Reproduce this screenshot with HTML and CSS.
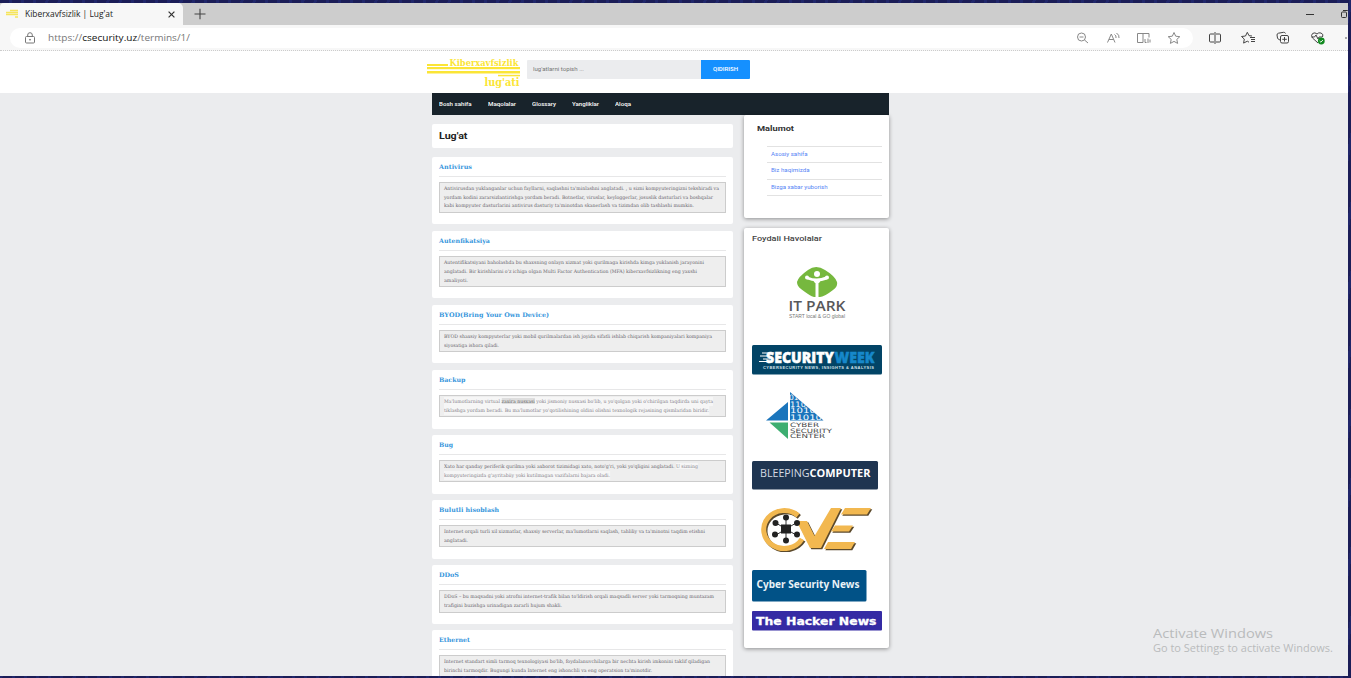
FILE: index.html
```html
<!DOCTYPE html>
<html lang="uz">
<head>
<meta charset="utf-8">
<title>Kiberxavfsizlik | Lug'at</title>
<link rel="stylesheet" href="styles.css">
</head>
<body>
<div class="desktop">
<div class="window">
  <div class="tabs">
    <div class="tab">
      <svg class="favicon" width="13" height="10" viewBox="0 0 13 10"><path d="M0 3.5h12M0 5.5h12M4 1.5h8M9 8h3" stroke="#f6e55c" stroke-width="1.6"/></svg>
      <span class="tab-title"><span data-w="88">Kiberxavfsizlik | Lug'at</span></span>
      <svg width="7" height="7" viewBox="0 0 7 7"><path d="M.6.6l5.8 5.8M6.4.6L.6 6.4" stroke="#333" stroke-width="1.2"/></svg>
    </div>
    <svg class="plus" width="12" height="12" viewBox="0 0 12 12"><path d="M6 .8v10.4M.5 6h11" stroke="#444" stroke-width="1.1"/></svg>
    <svg class="winctl" width="45" height="12" viewBox="0 0 45 12" fill="none" stroke="#333"><path d="M2 6.5h8"/><rect x="37.500" y="4" width="5" height="5.500" rx="1"/><path d="M39 2.500h4.500q1.500 0 1.500 1.500v4"/></svg>
  </div>
  <div class="toolbar">
    <div class="address">
      <svg width="12" height="12" viewBox="0 0 12 12" fill="none" stroke="#777"><rect x="1.500" y="4.500" width="9" height="6.500" rx="1"/><path d="M3.700 4.500V3a2.300 2.300 0 0 1 4.600 0v1.500"/><circle cx="6" cy="7.700" r=".5" fill="#777"/></svg>
      <span class="url"><span data-w="142">https://<b>csecurity.uz</b>/termins/1/</span></span>
      <svg class="tools" width="106" height="14" viewBox="0 0 106 14" fill="none" stroke="#888">
        <circle cx="5.500" cy="6" r="4"/><path d="M8.500 9l3.500 3M3.500 6h4"/>
        <path d="M31.500 11.500L35.300 3l3.700 8.500M33 8.500h4.800M38.500 3.500q2 1 1.500 3.500M40.500 2q3 2 2.500 5" />
        <path d="M67 11.500h-5.500V2.500h5.500v9M67 2.500h6v4M69 8v3.500h1.500M72 7.500v4.500M74 8.500v3"/>
        <path d="M98 1.500l1.700 3.700 4.100.5-3 2.700.8 4-3.600-2-3.600 2 .8-4-3-2.700 4.100-.5z"/>
      </svg>
    </div>
    <svg class="actions" width="144" height="14" viewBox="0 0 144 14" fill="none" stroke="#444">
      <path d="M6 3H2.500Q1.500 3 1.500 4v6q0 1 1 1H6M8 3h3.500q1 0 1 1v6q0 1-1 1H8M7 1v12"/>
      <path d="M44 5l-3-.3-1.700-3.400L37.500 5l-4 .5 2.800 2.600-.7 4 3.700-1.900 1.700 1M42 6.500h5M43 8.500h4M43 10.500h4"/>
      <path d="M72 9q-2-.5-2.500-2L69 4q0-1.500 1.500-1.800l5-.9q1.500-.2 2 1.200"/><rect x="72.500" y="4.500" width="8" height="7.500" rx="1.500"/><path d="M76.500 6v4.500M74.300 8.300h4.500"/>
      <path d="M110 12L104.500 7q-2-3 .2-4.600Q107 1 109 3q1.500-1.800 4-1 3 1.200 1.500 4M103.500 6h3l1.500-2 2 4 1-2h3"/>
      <circle cx="113.300" cy="10" r="3.400" fill="#128a20" stroke="none"/><path d="M111.700 10l1.200 1.200 2-2.200" stroke="#fff" stroke-width=".9"/>
      <circle cx="138" cy="7" r=".8" fill="#444" stroke="none"/>
    </svg>
  </div>

  <header class="site-header">
    <svg class="logo" width="94" height="31" viewBox="0 0 94 31" fill="#fbe536" font-family="DejaVu Serif" font-weight="bold">
      <rect x="0" y="6" width="21" height="2"/><rect x="0" y="9" width="93" height="2.200"/><rect x="0" y="13" width="93" height="2.500"/><rect x="71" y="16.800" width="22" height="1.500"/>
      <text x="22.500" y="8" font-size="8.800" textLength="69" lengthAdjust="spacingAndGlyphs">Kiberxavfsizlik</text>
      <text x="57.500" y="28" font-size="10.500" textLength="35" lengthAdjust="spacingAndGlyphs">lug'ati</text>
    </svg>
    <div class="search"><span data-w="51">lug'atlarni topish ...</span></div>
    <div class="search-btn"><span data-w="25">QIDIRISH</span></div>
  </header>

  <div class="page">
    <nav class="nav">
      <span data-w="32.500">Bosh sahifa</span><span data-w="28">Maqolalar</span><span data-w="24">Glossary</span><span data-w="27">Yangliklar</span><span data-w="16">Aloqa</span>
    </nav>
    <div class="columns">
      <main class="main">
        <h1 class="title"><span data-w="28.500">Lug'at</span></h1>

        <article class="term"><h2><span data-w="33">Antivirus</span></h2><div class="box">
          <p><span data-w="275">Antivirusdan yuklanganlar uchun fayllarni, saqlashni ta'minlashni anglatadi. , u sizni kompyuteringizni tekshiradi va</span></p>
          <p><span data-w="269">yordam kodini zararsizlantirishga yordam beradi. Botnetlar, viruslar, keyloggerlar, josuslik dasturlari va boshqalar</span></p>
          <p><span data-w="250">kabi kompyuter dasturlarini antivirus dasturiy ta'minotdan skanerlash va tizimdan olib tashlashi mumkin.</span></p></div></article>

        <article class="term"><h2><span data-w="51">Autenfikatsiya</span></h2><div class="box">
          <p><span data-w="260">Autentifikatsiyani baholashda bu shaxsning onlayn xizmat yoki qurilmaga kirishda kimga yuklanish jarayonini</span></p>
          <p><span data-w="253">anglatadi. Bir kirishlarini o'z ichiga olgan Multi Factor Authentication (MFA) kiberxavfsizlikning eng yaxshi</span></p>
          <p><span data-w="24">amaliyoti.</span></p></div></article>

        <article class="term"><h2><span data-w="110">BYOD(Bring Your Own Device)</span></h2><div class="box">
          <p><span data-w="268">BYOD shaxsiy kompyuterlar yoki mobil qurilmalardan ish joyida sifatli ishlab chiqarish kompaniyalari kompaniya</span></p>
          <p><span data-w="55">siyosatiga ishora qiladi.</span></p></div></article>

        <article class="term"><h2><span data-w="26.500">Backup</span></h2><div class="box">
          <p><span class="pale" data-w="269">Ma'lumotlarning virtual <mark>zaxira nusxasi</mark> yoki jismoniy nusxasi bo'lib, u yo'qolgan yoki o'chirilgan taqdirda uni qayta</span></p>
          <p><span class="pale" data-w="265">tiklashga yordam beradi. Bu ma'lumotlar yo'qotilishining oldini olishni texnologik rejasining qismlaridan biridir.</span></p></div></article>

        <article class="term"><h2><span data-w="14">Bug</span></h2><div class="box">
          <p><span data-w="254">Xato har qanday periferik qurilma yoki axborot tizimidagi xato, noto'g'ri, yoki yo'qligini anglatadi. <i class="pale">U sizning</i></span></p>
          <p><span class="pale" data-w="166">kompyuteringizda g'ayritabiiy yoki kutilmagan vazifalarni bajara oladi.</span></p></div></article>

        <article class="term"><h2><span data-w="60">Bulutli hisoblash</span></h2><div class="box">
          <p><span data-w="261">Internet orqali turli xil xizmatlar, shaxsiy serverlar, ma'lumotlarni saqlash, tahliliy va ta'minotni taqdim etishni</span></p>
          <p><span data-w="24">anglatadi.</span></p></div></article>

        <article class="term"><h2><span data-w="20">DDoS</span></h2><div class="box">
          <p><span data-w="270">DDoS – bu maqsadni yoki atrofni internet-trafik bilan to'ldirish orqali maqsadli server yoki tarmoqning muntazam</span></p>
          <p><span data-w="118">trafigini buzishga urinadigan zararli hujum shakli.</span></p></div></article>

        <article class="term"><h2><span data-w="31">Ethernet</span></h2><div class="box">
          <p><span data-w="266">Internet standart simli tarmoq texnologiyasi bo'lib, foydalanuvchilarga bir nechta kirish imkonini taklif qiladigan</span></p>
          <p><span data-w="208">birinchi tarmoqdir. Bugungi kunda Internet eng ishonchli va eng operatsion ta'minotdir.</span></p></div></article>
      </main>

      <aside class="side">
        <section class="panel info">
          <h3><span data-w="37">Malumot</span></h3>
          <ul><li><span data-w="36.500">Asosiy sahifa</span></li><li><span data-w="38.500">Biz haqimizda</span></li><li><span data-w="56.500">Bizga xabar yuborish</span></li></ul>
        </section>
        <section class="panel links">
          <h4><span data-w="70">Foydali Havolalar</span></h4>
          <svg class="itpark" width="130" height="57" viewBox="0 0 130 57">
            <path d="M45 16Q46 11 56 4q8-6 17 0 10 6 12 12 1 5-4 8-9 7-13 7h-6q-4-1-13-8-4-3-4-7z" fill="#76b83e"/>
            <circle cx="65" cy="8" r="3" fill="#fff"/><path d="M55.500 12q9 4 19 0M65 14v17" stroke="#fff" stroke-width="3" fill="none"/><circle cx="55" cy="11.500" r="2" fill="#fff"/><circle cx="75" cy="11.500" r="2" fill="#fff"/><path d="M60 13h10l-3 4h-4z" fill="#fff"/>
            <text x="36.500" y="44.500" font-family="Open Sans" font-weight="600" font-size="14" fill="#58585a" textLength="57" lengthAdjust="spacingAndGlyphs">IT PARK</text>
            <text x="37" y="52" font-family="Liberation Sans" font-size="4.800" fill="#777" textLength="56" lengthAdjust="spacingAndGlyphs">START local &amp; GO global</text>
          </svg>
          <svg class="secweek" width="130" height="30" viewBox="0 0 130 30">
            <rect width="130" height="29.500" rx="1.500" fill="#024466"/>
            <path d="M10 8h8M8 11h9M11 14h7M7 16.500h10" stroke="#fff"/>
            <g font-family="Open Sans" font-weight="800" font-size="16" stroke-width=".5"><text x="14" y="17.500" fill="#fff" stroke="#fff" textLength="68" lengthAdjust="spacingAndGlyphs">SECURITY</text><text x="82.500" y="17.500" fill="#1688ca" stroke="#1688ca" textLength="40" lengthAdjust="spacingAndGlyphs">WEEK</text></g>
            <text x="11" y="23.800" font-family="Liberation Sans" font-weight="bold" font-size="4" fill="#d4e1e8" textLength="111">CYBERSECURITY NEWS, INSIGHTS &amp; ANALYSIS</text>
          </svg>
          <svg class="csc" width="130" height="48" viewBox="0 0 130 48">
            <defs><clipPath id="tri"><path d="M38 0L71.500 28.500H38z"/></clipPath></defs>
            <path d="M36 10v18.500H14z" fill="#1b75bc"/><path d="M17.500 30.500H36V47z" fill="#3dae71"/><path d="M38 0L71.500 28.500H38z" fill="#1b75bc"/>
            <g clip-path="url(#tri)" fill="#fff" font-family="DejaVu Sans" font-size="7.500"><text x="37" y="8">01</text><text x="38" y="14.500" textLength="16" lengthAdjust="spacingAndGlyphs">110</text><text x="38" y="21" textLength="26" lengthAdjust="spacingAndGlyphs">1010</text><text x="38" y="27.500" textLength="32" lengthAdjust="spacingAndGlyphs">11010</text></g>
            <g fill="#444" font-family="DejaVu Sans" font-size="6"><text x="38" y="34.600" textLength="29" lengthAdjust="spacingAndGlyphs">CYBER</text><text x="38" y="40.500" textLength="42" lengthAdjust="spacingAndGlyphs">SECURITY</text><text x="38" y="46.400" textLength="35" lengthAdjust="spacingAndGlyphs">CENTER</text></g>
          </svg>
          <svg class="bleeping" width="130" height="29" viewBox="0 0 130 29">
            <rect width="126" height="28.500" rx="1.500" fill="#1f3551"/>
            <g font-family="Open Sans" font-size="10.300" fill="#fff"><text x="8" y="16" fill="#d5dbe3" textLength="49.500" lengthAdjust="spacingAndGlyphs">BLEEPING</text><text x="57.500" y="16" font-weight="bold" textLength="61" lengthAdjust="spacingAndGlyphs">COMPUTER</text></g>
          </svg>
          <svg class="cve" width="130" height="46" viewBox="0 0 130 46">
            <defs>
              <linearGradient id="gold" x1="0" y1="0" x2="0" y2="1"><stop offset="0" stop-color="#f7c566"/><stop offset="1" stop-color="#eba93a"/></linearGradient>
              <g id="letters"><path d="M46 9.500A20.500 19 0 1 0 50 33" fill="none" stroke="currentColor" stroke-width="5"/><path d="M44.500 15H55l7.500 15L79 2h10L69 42H58z" fill="currentColor"/><path d="M93 2h26l-4 6.500H89zM83 19.500h18l-4 6H79zM76 36h27l-4 7H72z" fill="currentColor"/></g></defs>
            <use href="#letters" x="1.300" y="1.300" color="#5c4a2c"/><use href="#letters" color="#f2b850"/>
            <path d="M34 11v24M24 17l20 12M24 29l20-12" stroke="#333"/><rect x="29" y="18.500" width="10" height="9" fill="#222"/>
            <g fill="#222"><circle cx="34" cy="11.500" r="3"/><circle cx="34" cy="34.500" r="3"/><circle cx="23.500" cy="17" r="3"/><circle cx="23" cy="28.500" r="3"/><circle cx="45" cy="17" r="3"/><circle cx="45" cy="28.500" r="3"/></g>
          </svg>
          <svg class="csn" width="130" height="32" viewBox="0 0 130 32"><rect width="114.500" height="31.500" rx="1.500" fill="#015287"/><text x="4.500" y="17.700" font-family="Noto Sans" font-weight="bold" font-size="9.800" fill="#e9f1f6" textLength="103" lengthAdjust="spacingAndGlyphs">Cyber Security News</text></svg>
          <svg class="thn" width="130" height="20" viewBox="0 0 130 20"><rect width="130" height="19.500" rx="1" fill="#352ba4"/><text x="4" y="13.500" font-family="DejaVu Sans" font-weight="bold" font-size="11" fill="#fff" stroke="#fff" stroke-width=".3" textLength="120.500" lengthAdjust="spacingAndGlyphs">The Hacker News</text></svg>
        </section>
      </aside>
    </div>
  </div>
  <div class="watermark"><div class="wm-title"><span data-w="120">Activate Windows</span></div><div class="wm-sub"><span data-w="180">Go to Settings to activate Windows.</span></div></div>
</div>
</div>
<script src="fit.js"></script>
</body>
</html>
```
FILE: styles.css
```css
* { box-sizing: border-box; }
body { margin: 0; width: 1351px; height: 678px; overflow: hidden; font-family: Roboto, "Liberation Sans", sans-serif; }
h1, h2, h3, h4, p, ul { margin: 0; padding: 0; list-style: none; }
svg { display: block; flex: none; }
[data-w] { display: inline-block; vertical-align: top; white-space: nowrap; transform-origin: 0 50%; flex: none; }
.desktop { height: 678px; padding: 3px 3px 2px 0; background: repeating-linear-gradient(100deg, #1b1d57 0 9px, #20266a 9px 12px); }
.window { position: relative; height: 673px; background: #ebecee; overflow: hidden; }

.tabs { display: flex; align-items: center; height: 22px; background: #cdcdcd; }
.tab { display: flex; align-items: center; width: 183px; height: 22px; padding: 0 8px 0 6px; background: #f7f7f7; border-radius: 4px 5px 0 0; }
.tab-title { flex: 1; padding-left: 6px; font: 8.5px/22px "Open Sans", sans-serif; color: #222; }
.plus { margin-left: 10.5px; }
.winctl { margin-left: auto; margin-right: -1px; }

.toolbar { display: flex; align-items: center; height: 26px; padding-left: 10px; background: #f7f7f7; border-bottom: 1px dotted #ccc; }
.address { display: flex; align-items: center; width: 1183px; flex: none; height: 20px; padding: 0 11px 0 14px; background: #fff; border-radius: 10px; }
.url { flex: 1; padding-left: 11.5px; font: 9.300px/20px "Open Sans", sans-serif; color: #777; }
.url b { font-weight: 400; color: #111; }
.actions { margin-left: 14.500px; margin-right: -20px; }

.site-header { display: flex; height: 41.500px; padding: 9px 0 0 426.500px; background: #fff; font-size: 5.800px; }
.logo { margin-top: -2px; margin-right: 6.500px; overflow: visible; }
.search { width: 174px; height: 19px; padding-left: 5.5px; background: #ebecee; line-height: 18px; color: #777; border-radius: 1px 0 0 1px; }
.search-btn { width: 48.5px; height: 19px; background: #1590ff; color: #fff; font-weight: 500; line-height: 18px; padding-left: 12px; border-radius: 0 1px 1px 0; }

.page { width: 457px; margin-left: 432px; }
.nav { display: flex; gap: 16.200px; height: 22.5px; padding-left: 7px; background: #18232b; color: #fff; font-weight: 500; font-size: 5.800px; line-height: 22px; }
.columns { display: flex; justify-content: space-between; align-items: flex-start; }
.main { width: 301px; padding-top: 8.700px; }
.title { height: 24.5px; padding-left: 7px; background: #fff; border-radius: 2px; font-size: 9.5px; font-weight: 700; line-height: 23px; color: #222; margin-bottom: 8.5px; }
.term { padding: 5px 7px 11.250px; margin-bottom: 6.500px; background: #fff; border-radius: 2px; }
.term h2 { height: 15px; border-bottom: 1px solid #e7e7e8; font: bold 6.300px/10px "DejaVu Serif", serif; color: #3796dc; margin-bottom: 4.900px; }
.box { padding: 1px 3.700px 1.600px; background: #eee; border: 1px solid #ccc; }
.box p { height: 8.950px; font: 4.900px/8.950px "DejaVu Serif", serif; color: #68656d; }
.pale { background: #f6f6f6; font-style: normal; color: #85828a; }
.pale mark { background: #dedede; color: #666; }

.side { width: 145px; }
.panel { background: #fff; border-radius: 2px; box-shadow: 0 1px 4px rgba(0, 0, 0, .4); }
.info { height: 102.500px; padding: 8px 7px 0 13px; margin-bottom: 10px; }
.info h3 { font-size: 7.800px; line-height: 12px; font-weight: 700; color: #333; }
.info ul { margin: 11px 0 0 10px; border-top: 1px solid #e2e2e2; }
.info li { height: 16.400px; padding-left: 4px; border-bottom: 1px solid #e2e2e2; font-size: 5.600px; line-height: 15px; color: #5584f5; }
.links { height: 420.500px; padding: 5px 7.500px 0; }
.links h4 { font-size: 8px; line-height: 12px; font-weight: 500; color: #444; }
.itpark { margin-top: 21px; }
.secweek { margin-top: 22px; }
.csc { margin-top: 17px; }
.bleeping { margin-top: 21px; }
.cve { margin-top: 16px; }
.csn { margin-top: 18px; }
.thn { margin-top: 9px; }

.watermark { position: absolute; left: 1153px; top: 622px; font-family: "Open Sans", sans-serif; color: #b9bbbc; }
.wm-title { font-size: 13px; line-height: 17px; }
.wm-sub { font-size: 10px; line-height: 13px; }
```
FILE: fit.js
```js
// Stretch each label horizontally to the width given in data-w.
Array.from(document.querySelectorAll("[data-w]")).forEach(function (el) {
  var natural = el.getBoundingClientRect().width;
  var target = parseFloat(el.dataset.w);
  el.style.transform = "scaleX(" + target / natural + ")";
  el.style.marginRight = target - natural + "px";
});
```
